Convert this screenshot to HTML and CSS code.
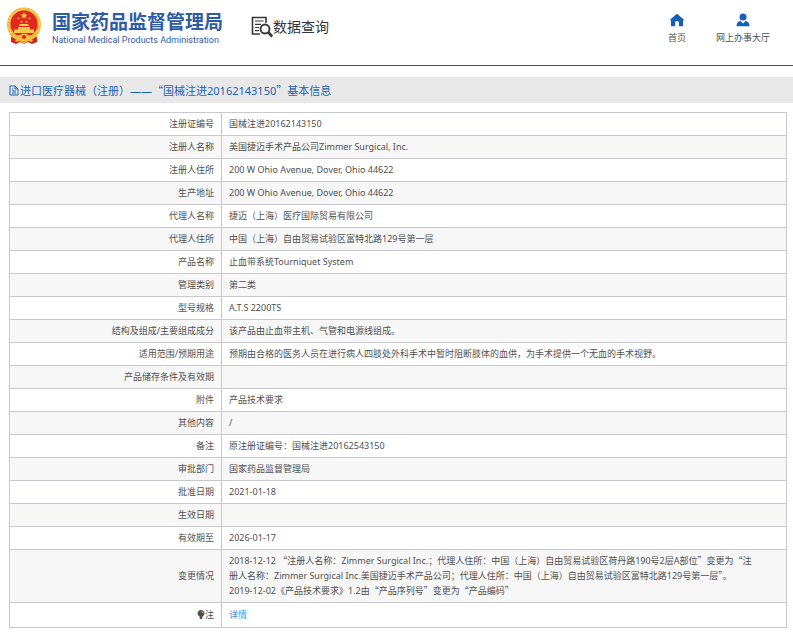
FILE: index.html
```html
<!DOCTYPE html>
<html lang="zh-CN">
<head>
<meta charset="utf-8">
<title>国家药品监督管理局 数据查询</title>
<link rel="stylesheet" href="styles.css">
</head>
<body>
<header class="site-header">
  <div class="brand">
    <svg class="emblem" viewBox="0 0 36 38" aria-hidden="true">
      <path d="M5 28 L5 35 L10 37 L14 35 L18 37 L22 35 L26 37 L31 35 L31 28Z" fill="#d5231c"/>
      <circle cx="18" cy="17.500" r="17" fill="#f0b535"/>
      <circle cx="18" cy="17.500" r="15.500" fill="none" stroke="#f9d262" stroke-width="1.500" stroke-dasharray="2 1"/>
      <circle cx="18" cy="17" r="13.500" fill="#e02720"/>
      <path d="M18 5l1 2.400 2.600.1-2 1.700.7 2.500-2.300-1.400-2.300 1.400.7-2.500-2-1.700 2.600-.1z" fill="#f9cc45"/>
      <g fill="#f3b338"><circle cx="12.500" cy="11.500" r="1"/><circle cx="23.500" cy="11.500" r="1"/><circle cx="15.500" cy="14.800" r="1"/><circle cx="20.500" cy="14.800" r="1"/></g>
      <path d="M13 19l1-2h8l1 2zM12 20h12v2.500h4V26H8v-3.500h4z" fill="#f7c94a"/>
      <path d="M4 26q7 3 10 2 4-3 8 0 3 1 10-2l-1 4q-5 1-8 0-2 3-5 3t-5-3q-3 1-8 0z" fill="#f5be3c"/>
      <circle cx="18" cy="30" r="2" fill="#d5231c"/>
      <path d="M9 33l5-1 4 3 4-3 5 1-1 2-4-1-4 3-4-3-4 1z" fill="#f0b535"/>
    </svg>
    <div class="brand-text">
      <div class="brand-cn">国家药品监督管理局</div>
      <div class="brand-en">National Medical Products Administration</div>
    </div>
  </div>
  <div class="section-name">
    <svg class="search-icon" viewBox="0 0 22 22" aria-hidden="true" fill="none" stroke="#34343c">
      <path d="M15 7V1.500H1.500v16.500H9" stroke-width="1.600"/>
      <path d="M4 5h8.500M4 8.300h6M4 11.500h4M4 14.700h4" stroke-width="1.200"/>
      <circle cx="14" cy="13" r="4.500" stroke-width="1.900"/>
      <path d="M17.200 16.200l4 4.300" stroke-width="2.600"/>
    </svg>
    <span>数据查询</span>
  </div>
  <nav class="top-nav">
    <a href="#home">
      <svg class="nav-icon" viewBox="0 0 14 14" aria-hidden="true"><path d="M7 .8L.5 6.300V8H1v5.300H5V9.700q0-1.700 2-1.700t2 1.700v3.600h4V8h.5V6.300z" fill="#1360b8"/></svg>
      <span>首页</span>
    </a>
    <a href="#hall">
      <svg class="nav-icon" viewBox="0 0 14 14" aria-hidden="true"><circle cx="7" cy="4" r="3.500" fill="#1360b8"/><path d="M.5 13.300q0-4.800 4-5.300L7 10.500 9.500 8q4 .5 4 5.300z" fill="#1360b8"/></svg>
      <span>网上办事大厅</span>
    </a>
  </nav>
</header>
<main>
  <h1 class="page-title">
    <svg class="doc-icon" viewBox="0 0 10 11" aria-hidden="true" fill="none" stroke="#1f62b5"><path d="M1 1h5l3 3v6H1zM6 1v3h3M3 4h1.500M3 6h4M3 8h4"/></svg>
    <span>进口医疗器械（注册）——<span class="cjk">“</span>国械注进20162143150<span class="cjk">”</span>基本信息</span>
  </h1>
  <table class="details">
    <tbody>
      <tr><th scope="row">注册证编号</th><td>国械注进20162143150</td></tr>
      <tr><th scope="row">注册人名称</th><td>美国捷迈手术产品公司Zimmer Surgical, Inc.</td></tr>
      <tr><th scope="row">注册人住所</th><td>200 W Ohio Avenue, Dover, Ohio 44622</td></tr>
      <tr><th scope="row">生产地址</th><td>200 W Ohio Avenue, Dover, Ohio 44622</td></tr>
      <tr><th scope="row">代理人名称</th><td>捷迈（上海）医疗国际贸易有限公司</td></tr>
      <tr><th scope="row">代理人住所</th><td>中国（上海）自由贸易试验区富特北路129号第一层</td></tr>
      <tr><th scope="row">产品名称</th><td>止血带系统Tourniquet System</td></tr>
      <tr><th scope="row">管理类别</th><td>第二类</td></tr>
      <tr><th scope="row">型号规格</th><td>A.T.S 2200TS</td></tr>
      <tr><th scope="row">结构及组成/主要组成成分</th><td>该产品由止血带主机、气管和电源线组成。</td></tr>
      <tr><th scope="row">适用范围/预期用途</th><td>预期由合格的医务人员在进行病人四肢处外科手术中暂时阻断肢体的血供，为手术提供一个无血的手术视野。</td></tr>
      <tr><th scope="row">产品储存条件及有效期</th><td></td></tr>
      <tr><th scope="row">附件</th><td>产品技术要求</td></tr>
      <tr><th scope="row">其他内容</th><td>/</td></tr>
      <tr><th scope="row">备注</th><td>原注册证编号：国械注进20162543150</td></tr>
      <tr><th scope="row">审批部门</th><td>国家药品监督管理局</td></tr>
      <tr><th scope="row">批准日期</th><td>2021-01-18</td></tr>
      <tr><th scope="row">生效日期</th><td></td></tr>
      <tr><th scope="row">有效期至</th><td>2026-01-17</td></tr>
      <tr class="changes"><th scope="row">变更情况</th><td>2018-12-12 <span class="cjk">“</span>注册人名称：Zimmer Surgical Inc.；代理人住所：中国（上海）自由贸易试验区荷丹路190号2层A部位<span class="cjk">”</span>变更为<span class="cjk">“</span>注<br>册人名称：Zimmer Surgical Inc.美国捷迈手术产品公司；代理人住所：中国（上海）自由贸易试验区富特北路129号第一层<span class="cjk">”</span>。<br>2019-12-02《产品技术要求》1.2由<span class="cjk">“</span>产品序列号<span class="cjk">”</span>变更为<span class="cjk">“</span>产品编码<span class="cjk">”</span></td></tr>
      <tr class="note"><th scope="row"><svg class="bulb-icon" viewBox="0 0 8 9" aria-hidden="true"><path d="M4 0a3.300 3.300 0 0 1 2 6L5.300 7v2H2.700V7L2 6A3.300 3.300 0 0 1 4 0z" fill="#505050"/><path d="M4.500 1.500q1.300.2 1.500 1.500" stroke="#fff" stroke-width=".7" fill="none"/></svg>注</th><td><a href="#detail">详情</a></td></tr>
    </tbody>
  </table>
</main>
</body>
</html>
```
FILE: styles.css
```css
* {
  box-sizing: border-box;
}

body {
  margin: 0;
  background: #fff;
  color: #505050;
  font-family: "Noto Sans", "Noto Sans CJK SC", sans-serif;
  font-size: 9px;
  line-height: 15px;
}

a {
  text-decoration: none;
}

.cjk {
  font-family: "Noto Sans CJK SC", sans-serif;
}

.site-header {
  display: flex;
  align-items: flex-start;
  height: 66px;
  padding: 7px 23px 0 6px;
  border-bottom: 1px solid #265a92;
}

.brand {
  display: flex;
  gap: 10px;
}

.emblem {
  width: 36px;
  height: 38px;
}

.brand-text {
  padding-top: 4px;
  color: #2f5ba6;
  white-space: nowrap;
}

.brand-cn {
  font-size: 19px;
  line-height: 22px;
  font-weight: 700;
}

.brand-en {
  font-family: Roboto, sans-serif;
  font-size: 9px;
  line-height: 14px;
}

.section-name {
  display: flex;
  align-items: center;
  margin-left: 28px;
  padding-top: 9px;
  color: #34343c;
  font-size: 14px;
  line-height: 22px;
}

.search-icon {
  width: 22px;
  height: 22px;
}

.top-nav {
  display: flex;
  gap: 30px;
  margin-left: auto;
  padding-top: 6px;
}

.top-nav a {
  display: flex;
  flex-direction: column;
  align-items: center;
  gap: 3px;
  color: #505050;
}

.nav-icon {
  width: 14px;
  height: 14px;
}

.page-title {
  display: flex;
  align-items: center;
  height: 26px;
  margin: 11px 0 9px;
  padding-left: 9px;
  background: #e8e8e8;
  color: #1f62b5;
  font-size: 11px;
  font-weight: 400;
}

.doc-icon {
  width: 10px;
  height: 11px;
  margin-right: 1px;
}

main {
  padding-bottom: 7px;
}

.details {
  width: calc(100% - 15px);
  margin-left: 9px;
  border-collapse: collapse;
  border: 1px solid #c9c9cd;
}

.details th,
.details td {
  height: 23px;
  padding: 0 7px 2px;
  border: 1px solid #c9c9cd;
  text-align: left;
}

.details th {
  width: 212px;
  font-weight: 400;
  text-align: right;
}

.details tr:nth-child(even) {
  background: #f7f7f7;
}

.details .changes td {
  height: 53px;
}

.details .note td {
  height: 25px;
}

.details td a {
  color: #3296f0;
}

.bulb-icon {
  width: 8px;
  height: 9px;
  vertical-align: -1px;
}
```
